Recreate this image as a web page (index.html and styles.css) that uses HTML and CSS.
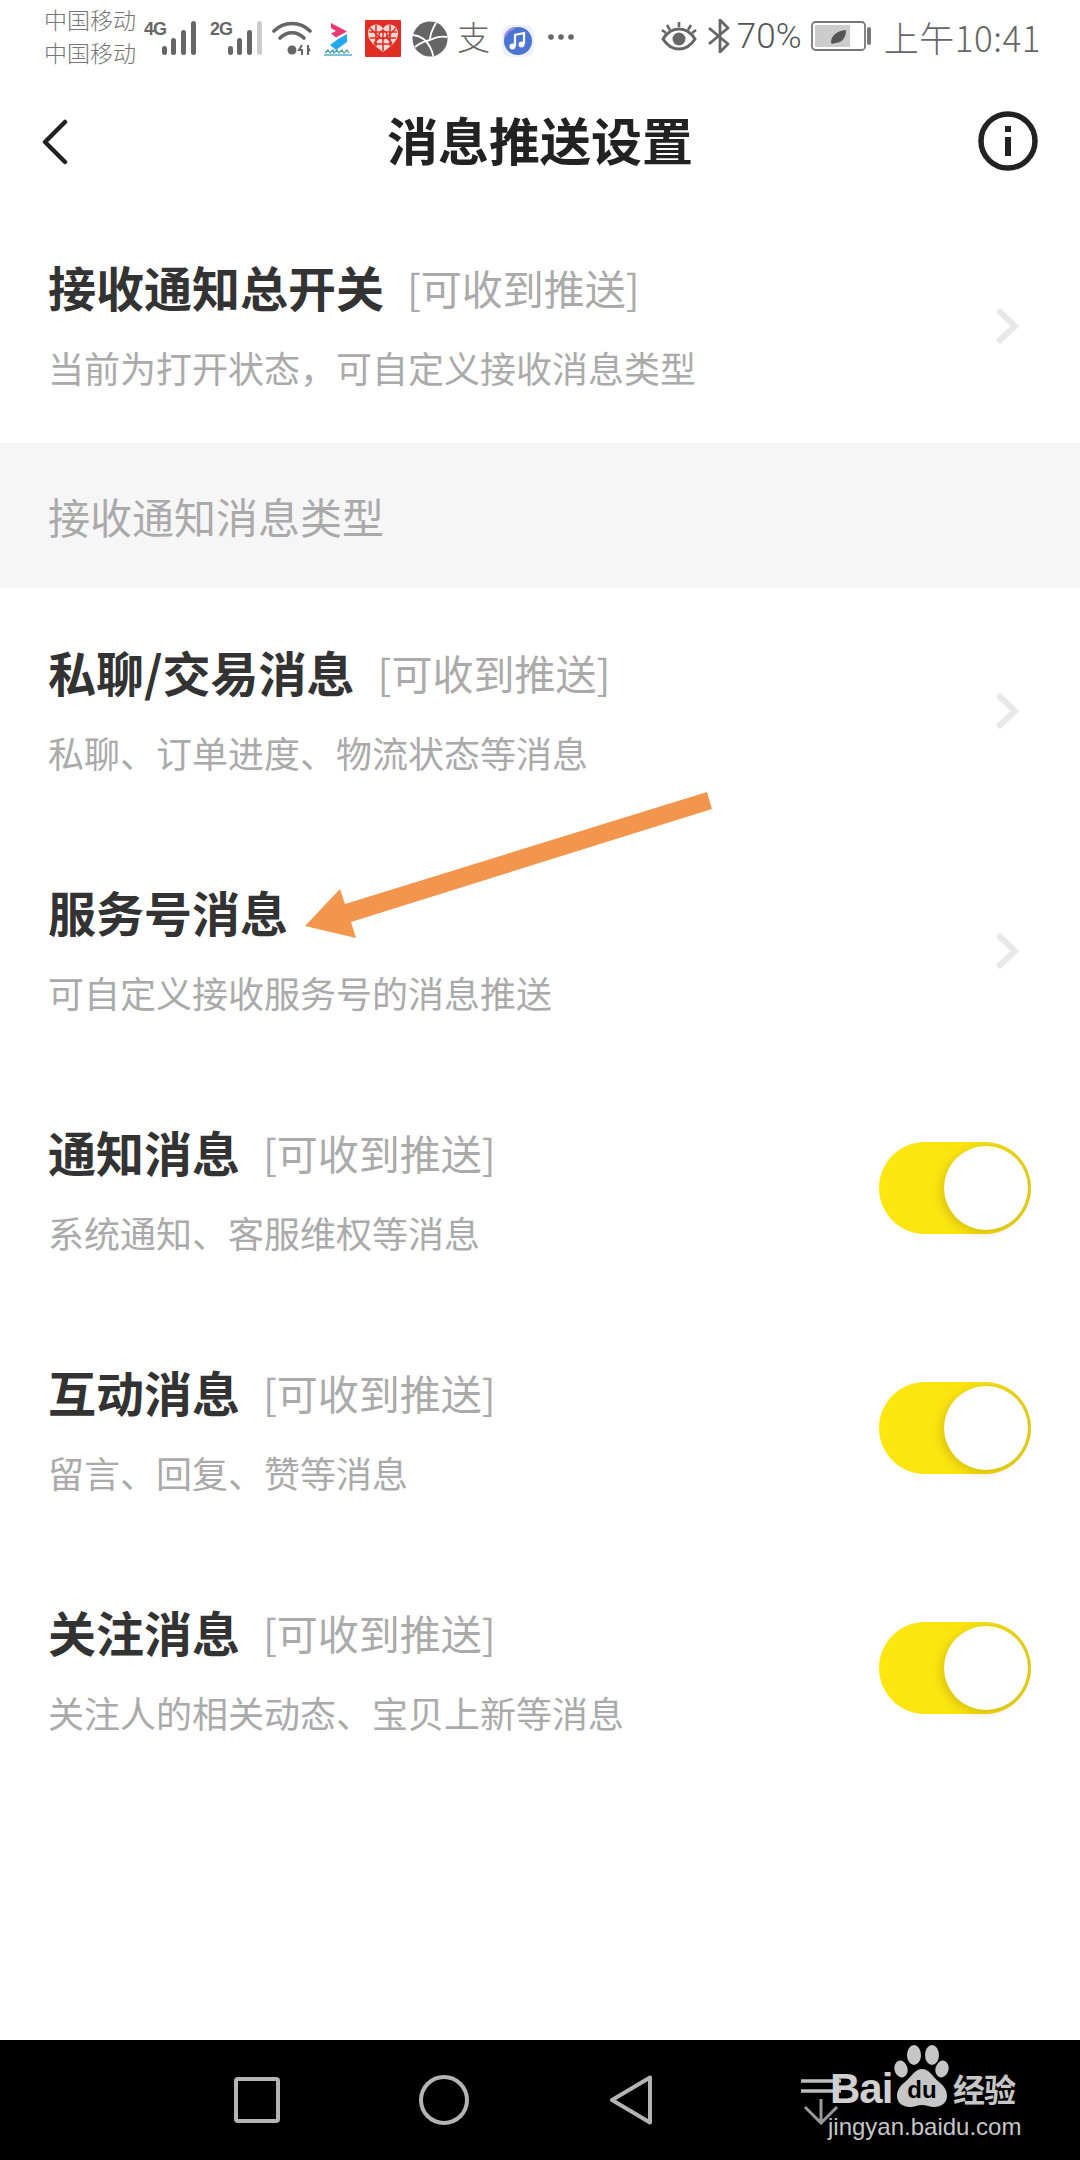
FILE: index.html
```html
<!DOCTYPE html>
<html lang="zh-CN">
<head>
<meta charset="utf-8">
<title>消息推送设置</title>
<link rel="stylesheet" href="styles.css">
</head>
<body>
<div class="phone">
  <div class="status">
    <div class="carriers"><span>中国移动</span><span>中国移动</span></div>
    <span class="net">4G</span>
    <svg class="sig" viewBox="0 0 34 34"><g fill="#666"><rect x="0" y="25" width="5" height="9" rx="2.5"/><rect x="9" y="17" width="5" height="17" rx="2.5"/><rect x="19" y="9" width="5" height="25" rx="2.5"/><rect x="29" y="0" width="5" height="34" rx="2.5"/></g></svg>
    <span class="net net2">2G</span>
    <svg class="sig" viewBox="0 0 34 34"><g fill="#666"><rect x="0" y="25" width="5" height="9" rx="2.5"/><rect x="9" y="17" width="5" height="17" rx="2.5"/><rect x="19" y="9" width="5" height="25" rx="2.5"/></g><rect x="29" y="0" width="5" height="34" rx="2.5" fill="#ccc"/></svg>
    <svg class="wifi" viewBox="0 0 40 34"><g fill="none" stroke="#666" stroke-width="3.6" stroke-linecap="round"><path d="M2 10C12 0 28 0 38 10"/><path d="M8 17C15 10 25 10 32 17"/></g><circle cx="20" cy="29" r="4.5" fill="#666"/><path d="M30 24l-3 5h3v5M36 24v10M38 30l-2-3" fill="none" stroke="#666" stroke-width="2"/></svg>
    <svg class="app1" viewBox="0 0 30 36"><path d="M8 2l16 8.500-11 6-5-4 5-2.500-5-3z" fill="#ea3a72"/><path d="M24 13v8L13 29l-6-5 8-6z" fill="#24a9ee"/><path d="M1 34h28" stroke="#5cb4d0" stroke-width="1.600"/><path d="M2 32l3-3 2 3 3-3 1 3 3-3 2 3 3-3 2 3 3-3 2 3" fill="none" stroke="#4c9f9c" stroke-width="1.300"/></svg>
    <svg class="pdd" viewBox="0 0 36 37"><rect width="36" height="37" rx="1" fill="#e02e24"/><path d="M18 32C8 25 3 20 3 13c0-5 4-8.500 8-8.500 3 0 5.500 1.500 7 4 1.500-2.500 4-4 7-4 4 0 8 3.500 8 8.500 0 7-5 12-15 19z" fill="#f4d8d2"/><path d="M4 12h28M5 18h26M9 24h18M11 5v21M18 9v22M25 5v21M5 8l10 10M31 8L21 18M9 23l6-6M27 23l-6-6" stroke="#e02e24" stroke-width="1.500" fill="none"/><circle cx="18" cy="15" r="4" fill="none" stroke="#e02e24" stroke-width="1.500"/></svg>
    <svg class="globe" viewBox="0 0 36 36"><circle cx="18" cy="18" r="17.500" fill="#666"/><path d="M1 14c8 1 13 4 17 12 2 4 3 7 3 9M24 2c-3 5-6 10-6 17M18 19c6-3 12-4 17-3M3 26c4-3 9-6 15-7" fill="none" stroke="#fff" stroke-width="1.800"/></svg>
    <span class="zhi">支</span>
    <svg class="music" viewBox="0 0 32 32"><rect width="32" height="32" rx="9" fill="#eef0fa"/><circle cx="16" cy="16" r="14" fill="#4b74d6"/><path d="M3 11a14 14 0 0 1 9-8" fill="none" stroke="#a58be0" stroke-width="2.500"/><path d="M13 21V10l9-2v11" fill="none" stroke="#fff" stroke-width="2.200"/><circle cx="10.500" cy="21.500" r="3" fill="#fff"/><circle cx="19.500" cy="19.500" r="3" fill="#fff"/></svg>
    <svg class="more" viewBox="0 0 26 6"><g fill="#666"><circle cx="3" cy="3" r="2.800"/><circle cx="13" cy="3" r="2.800"/><circle cx="23" cy="3" r="2.800"/></g></svg>
    <div class="status-right">
      <svg class="eye" viewBox="0 0 36 30"><path d="M2 18C7 10 12 8 18 8s11 2 16 10c-5 8-10 10-16 10S7 26 2 18z" fill="none" stroke="#666" stroke-width="3"/><circle cx="18" cy="18" r="6.500" fill="#666"/><path d="M18 1v5M6 4l3 5M30 4l-3 5M1 9l4 3M35 9l-4 3" stroke="#666" stroke-width="2.600"/></svg>
      <svg class="bt" viewBox="0 0 22 34"><path d="M1 9l19 16-8 8V1l8 8L1 25" fill="none" stroke="#666" stroke-width="2.800" stroke-linejoin="round"/></svg>
      <span class="pct">70%</span>
      <svg class="batt" viewBox="0 0 60 30"><rect x="1" y="1" width="53" height="28" rx="3.500" fill="none" stroke="#777" stroke-width="1.800"/><rect x="4" y="4" width="35" height="22" fill="#ccc"/><path d="M20 22c0-8 6-12 15-13 0 9-5 13-11 13l-2 1z" fill="#555"/><rect x="56" y="6" width="4" height="18" rx="2" fill="#777"/></svg>
      <span class="time">上午10:41</span>
    </div>
  </div>

  <header class="nav">
    <svg class="back" viewBox="0 0 26 46"><path d="M23 3L3 23l20 20" fill="none" stroke="#222" stroke-width="4.500" stroke-linecap="round" stroke-linejoin="round"/></svg>
    <h1>消息推送设置</h1>
    <svg class="info" viewBox="0 0 60 60"><circle cx="30" cy="30" r="27" fill="none" stroke="#222" stroke-width="5.500"/><rect x="27" y="15" width="6" height="6" fill="#222"/><rect x="27" y="26" width="6" height="19" fill="#222"/></svg>
  </header>

  <section class="row">
    <div class="text"><div class="head"><b>接收通知总开关</b><span>[可收到推送]</span></div><p>当前为打开状态，可自定义接收消息类型</p></div>
    <svg class="chev" viewBox="0 0 24 38"><path d="M3 3l17 16L3 35" fill="none" stroke="#e8e8e8" stroke-width="6"/></svg>
  </section>

  <div class="band">接收通知消息类型</div>

  <section class="row">
    <div class="text"><div class="head"><b>私聊/交易消息</b><span>[可收到推送]</span></div><p>私聊、订单进度、物流状态等消息</p></div>
    <svg class="chev" viewBox="0 0 24 38"><path d="M3 3l17 16L3 35" fill="none" stroke="#e8e8e8" stroke-width="6"/></svg>
  </section>
  <section class="row">
    <div class="text"><div class="head"><b>服务号消息</b></div><p>可自定义接收服务号的消息推送</p></div>
    <svg class="chev" viewBox="0 0 24 38"><path d="M3 3l17 16L3 35" fill="none" stroke="#e8e8e8" stroke-width="6"/></svg>
  </section>
  <section class="row">
    <div class="text"><div class="head"><b>通知消息</b><span>[可收到推送]</span></div><p>系统通知、客服维权等消息</p></div>
    <div class="toggle"><i></i></div>
  </section>
  <section class="row">
    <div class="text"><div class="head"><b>互动消息</b><span>[可收到推送]</span></div><p>留言、回复、赞等消息</p></div>
    <div class="toggle"><i></i></div>
  </section>
  <section class="row">
    <div class="text"><div class="head"><b>关注消息</b><span>[可收到推送]</span></div><p>关注人的相关动态、宝贝上新等消息</p></div>
    <div class="toggle"><i></i></div>
  </section>

  <div class="spacer"></div>

  <footer class="sysnav">
    <svg class="nav-sq" viewBox="0 0 46 46"><rect x="2" y="2" width="42" height="42" rx="2" fill="none" stroke="#b4b4b4" stroke-width="4"/></svg>
    <svg class="nav-ci" viewBox="0 0 50 50"><circle cx="25" cy="25" r="23" fill="none" stroke="#b4b4b4" stroke-width="4"/></svg>
    <svg class="nav-tr" viewBox="0 0 44 50"><path d="M41 2.500v45L3 25z" fill="none" stroke="#b4b4b4" stroke-width="4" stroke-linejoin="round"/></svg>
    <svg class="nav-dl" viewBox="0 0 42 46"><path d="M1 2h40M1 12h40" stroke="#bdbdbd" stroke-width="3.500"/><path d="M21 20v24M5 28l16 16 16-16" fill="none" stroke="#9a9a9a" stroke-width="3"/></svg>
  </footer>

  <svg class="arrow" viewBox="0 0 1080 2160"><polygon points="707,792 712,809 351,922 356,938 305,926 340,889 345,904" fill="#f2954d"/></svg>

  <div class="mark">
    <div class="mark-top">
      <span class="bai">Bai</span>
      <svg class="paw" viewBox="0 0 56 62"><g fill="#c6c6c6"><ellipse cx="20" cy="10" rx="7" ry="10"/><ellipse cx="38" cy="10" rx="7" ry="10"/><ellipse cx="7" cy="24" rx="6.500" ry="8.500" transform="rotate(-15 7 24)"/><ellipse cx="48" cy="24" rx="6.500" ry="8.500" transform="rotate(15 48 24)"/><path d="M28 24c-7 0-10 7-17 13-6 5-8 9-8 14 0 7 6 11 13 11 4 0 8-2 12-2s8 2 12 2c7 0 13-4 13-11 0-5-2-9-8-14-7-6-10-13-17-13z"/></g><text x="28" y="53" text-anchor="middle" class="du">du</text></svg>
      <span class="jy">经验</span>
    </div>
    <div class="mark-url">jingyan.baidu.com</div>
  </div>
</div>
</body>
</html>
```
FILE: styles.css
```css
* { box-sizing: border-box; }
html, body { margin: 0; padding: 0; background: #fff; }
body { font-family: "Noto Sans CJK SC", "Noto Sans", sans-serif; }
.phone { position: relative; width: 1080px; height: 2160px; display: flex; flex-direction: column; overflow: hidden; background: #fff; }

.status { height: 72px; flex: none; display: flex; align-items: center; padding: 0 39px 0 44px; color: #666; }
.carriers { display: flex; flex-direction: column; font-size: 23px; line-height: 33px; width: 100px; color: #777; font-weight: 300; }
.net { font: 700 18px/1 "Liberation Sans", sans-serif; letter-spacing: -1px; width: 18px; align-self: flex-start; margin-top: 20px; }
.net2 { margin-left: 14px; }
.sig { width: 34px; height: 34px; margin-top: 4px; }
.wifi { width: 40px; height: 34px; margin-left: 10px; margin-top: 4px; }
.app1 { width: 30px; height: 36px; margin-left: 11px; margin-top: 6px; }
.pdd { width: 36px; height: 37px; margin-left: 12px; margin-top: 5px; }
.globe { width: 36px; height: 36px; margin-left: 11px; margin-top: 5px; }
.zhi { font-size: 33px; line-height: 36px; width: 34px; margin-left: 9px; color: #666; font-weight: 300; }
.music { width: 32px; height: 32px; margin-left: 11px; margin-top: 9px; }
.more { width: 26px; height: 6px; margin-left: 14px; margin-top: 1px; }
.status-right { margin-left: auto; display: flex; align-items: center; }
.eye { width: 36px; height: 30px; margin-right: 11px; }
.bt { width: 22px; height: 34px; margin-right: 7px; }
.pct { font: 300 35px/1 "Roboto", sans-serif; color: #555; width: 66px; }
.batt { width: 60px; height: 30px; margin-left: 8px; margin-right: 13px; }
.time { font: 300 35px/1 "Noto Sans CJK SC", sans-serif; color: #666; letter-spacing: 0.5px; }

.nav { height: 131px; flex: none; display: flex; align-items: center; justify-content: space-between; padding: 0 42px 0 42px; position: relative; }
.nav h1 { position: absolute; left: 0; right: 0; top: 35px; margin: 0; text-align: center; font-size: 51px; line-height: 64px; font-weight: 700; color: #222; pointer-events: none; }
.back { width: 26px; height: 46px; margin-bottom: -8px; }
.info { width: 60px; height: 60px; margin-bottom: -6px; }

.row { height: 240px; flex: none; display: flex; align-items: center; justify-content: space-between; padding: 0 47px 0 48px; }
.text { display: flex; flex-direction: column; }
.head { display: flex; align-items: center; height: 60px; margin-top: 3px; }
.head b { font-size: 48px; line-height: 60px; font-weight: 700; color: #333; }
.head span { font-size: 41px; line-height: 60px; color: #aaa; margin-left: 23px; margin-top: 2px; }
.text p { margin: 25px 0 0; font-size: 36px; line-height: 52px; color: #aaa; }
.chev { width: 24px; height: 38px; margin-right: 14px; margin-top: 6px; }

.band { height: 145px; flex: none; background: #f6f6f6; padding-left: 48px; display: flex; align-items: center; font-size: 42px; color: #aaa; }

.toggle { position: relative; width: 152px; height: 92px; border-radius: 46px; margin-right: 2px; background: linear-gradient(90deg, #ffe60f 0%, #fbe410 55%, #e2cc1c 100%); }
.toggle i { position: absolute; left: 65px; top: 4px; width: 84px; height: 84px; border-radius: 50%; background: #fff; box-shadow: -3px 3px 9px rgba(150, 125, 0, .3); }

.spacer { flex: 1; }
.sysnav { height: 120px; flex: none; background: #000; position: relative; display: block; }
.sysnav svg { position: absolute; }
.nav-sq { left: 234px; top: 37px; width: 46px; height: 46px; }
.nav-ci { left: 419px; top: 35px; width: 50px; height: 50px; }
.nav-tr { left: 609px; top: 35px; width: 44px; height: 50px; }
.nav-dl { left: 800px; top: 39px; width: 42px; height: 46px; }

.arrow { position: absolute; left: 0; top: 0; width: 1080px; height: 2160px; pointer-events: none; }

.mark { position: absolute; left: 830px; top: 2045px; width: 192px; color: #c6c6c6; }
.mark-top { display: flex; align-items: flex-end; height: 62px; width: 192px; white-space: nowrap; }
.bai { font: 700 42px/36px "Liberation Sans", sans-serif; letter-spacing: -1px; width: 64px; color: #d0d0d0; }
.paw { width: 56px; height: 62px; flex: none; }
.du { font: 700 24px "Liberation Sans", sans-serif; fill: #000; }
.jy { font-size: 32px; line-height: 38px; font-weight: 700; margin-left: 3px; color: #c6c6c6; flex: none; letter-spacing: -1px; }
.mark-url { font: 24px/24px "Liberation Sans", sans-serif; color: #c6c6c6; white-space: nowrap; margin-top: 8px; margin-left: -2px; }
```
